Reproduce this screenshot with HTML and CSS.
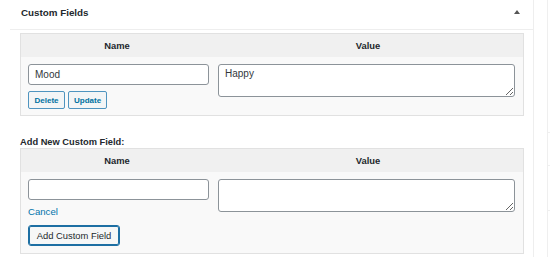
FILE: index.html
```html
<!DOCTYPE html>
<html lang="en">
<head>
  <meta charset="UTF-8">
  <title>Custom Fields</title>
  <link rel="stylesheet" href="styles.css">
</head>
<body>
  <div class="postbox">
    <div class="postbox-header">
      <h2>Custom Fields</h2>
      <span class="toggle-arrow"></span>
    </div>
    <div class="inside">
      <table class="meta-table">
        <thead>
          <tr>
            <th class="col-name">Name</th>
            <th class="col-value">Value</th>
          </tr>
        </thead>
        <tbody>
          <tr class="existing-row">
            <td class="col-name">
              <input type="text" class="key-input" value="Mood">
              <div class="row-actions">
                <button class="small-button">Delete</button>
                <button class="small-button">Update</button>
              </div>
            </td>
            <td class="col-value">
              <textarea class="value-input">Happy</textarea>
            </td>
          </tr>
        </tbody>
      </table>

      <p class="add-title">Add New Custom Field:</p>

      <table class="meta-table">
        <thead>
          <tr>
            <th class="col-name">Name</th>
            <th class="col-value">Value</th>
          </tr>
        </thead>
        <tbody>
          <tr class="new-row">
            <td class="col-name">
              <input type="text" class="key-input">
              <a class="cancel-link" href="#">Cancel</a>
              <button class="add-button">Add Custom Field</button>
            </td>
            <td class="col-value">
              <textarea class="value-input"></textarea>
            </td>
          </tr>
        </tbody>
      </table>
    </div>
  </div>
  <div class="side">
    <div class="side-row r1"></div>
    <div class="side-row r2"></div>
    <div class="side-row r3"></div>
  </div>
</body>
</html>
```

FILE: styles.css
```css
body {
  margin: 0;
  display: flex;
  background: #fff;
  font-family: 'Liberation Sans', Arial, sans-serif;
  color: #23282d;
  height: 257px;
  overflow: hidden;
}
.postbox {
  width: 523px;
  margin-left: 10px;
  border-right: 1px solid #eeeeee;
}
.postbox-header {
  display: flex;
  align-items: center;
  justify-content: space-between;
  height: 29px;
  border-bottom: 1px solid #eeeeee;
  padding: 0 13px 0 11px;
}
.postbox-header h2 {
  margin: 0;
  font-size: 9.8px;
  font-weight: bold;
  margin-top: -5px;
}
.toggle-arrow {
  width: 0;
  height: 0;
  border-left: 3px solid transparent;
  border-right: 3px solid transparent;
  border-bottom: 4px solid #555;
  margin-top: -6px;
}
.inside {
  padding: 3px 10px 0 10px;
}
.meta-table {
  width: 503px;
  border-collapse: collapse;
  border: 1px solid #e1e1e1;
  background: #f9f9f9;
}
.meta-table th {
  background: #f0f0f0;
  height: 23px;
  padding: 0;
  font-size: 9.4px;
  font-weight: bold;
  text-align: center;
}
.meta-table th.col-name {
  width: 191px;
}
.meta-table td {
  vertical-align: top;
  padding: 0;
}
.meta-table td.col-name {
  padding: 7px 4px 0 7px;
}
.meta-table td.col-value {
  padding: 7px 8px 0 5px;
}
.key-input {
  display: block;
  box-sizing: border-box;
  width: 181px;
  height: 21px;
  margin: 0;
  padding: 0 6px;
  border: 1px solid #8c9399;
  border-radius: 3px;
  font-family: inherit;
  font-size: 10px;
  color: #32373c;
  background: #fff;
}
.value-input {
  display: block;
  box-sizing: border-box;
  width: 297px;
  height: 33px;
  margin: 0;
  padding: 3px 6px;
  border: 1px solid #8c9399;
  border-radius: 3px;
  font-family: inherit;
  font-size: 10px;
  color: #32373c;
  background: #fff;
  resize: vertical;
}
.existing-row td {
  height: 51px;
}
.row-actions {
  display: flex;
  gap: 3px;
  margin-top: 6px;
}
.small-button {
  box-sizing: border-box;
  height: 18px;
  padding: 0 5px;
  border: 1px solid #4f94bf;
  border-radius: 2px;
  background: #f3f5f6;
  color: #0071a1;
  font-family: inherit;
  font-size: 8px;
  font-weight: bold;
}
.small-button:first-child {
  width: 37px;
}
.small-button:last-child {
  width: 39px;
}
.add-title {
  margin: 0;
  height: 32px;
  line-height: 16px;
  padding-top: 18px;
  box-sizing: border-box;
  font-size: 9.3px;
  font-weight: bold;
}
.cancel-link {
  display: block;
  margin-top: 6px;
  font-size: 9.6px;
  line-height: 12px;
  color: #0073aa;
  text-decoration: none;
}
.add-button {
  display: block;
  box-sizing: border-box;
  width: 92px;
  height: 21px;
  margin-top: 7px;
  margin-bottom: 7px;
  padding: 0;
  border: 1px solid #1d6fa3;
  box-shadow: inset 0 0 0 1px #1d6fa3;
  border-radius: 3px;
  background: #f6f7f7;
  color: #23282d;
  font-family: inherit;
  font-size: 9.4px;
}
.side {
  margin-left: 13px;
  flex: 1;
  border-left: 1px solid #efefef;
  padding-top: 132px;
}
.side-row {
  border-top: 1px solid #efefef;
}
.r1 {
  height: 32px;
}
.r2 {
  height: 44px;
}
```
